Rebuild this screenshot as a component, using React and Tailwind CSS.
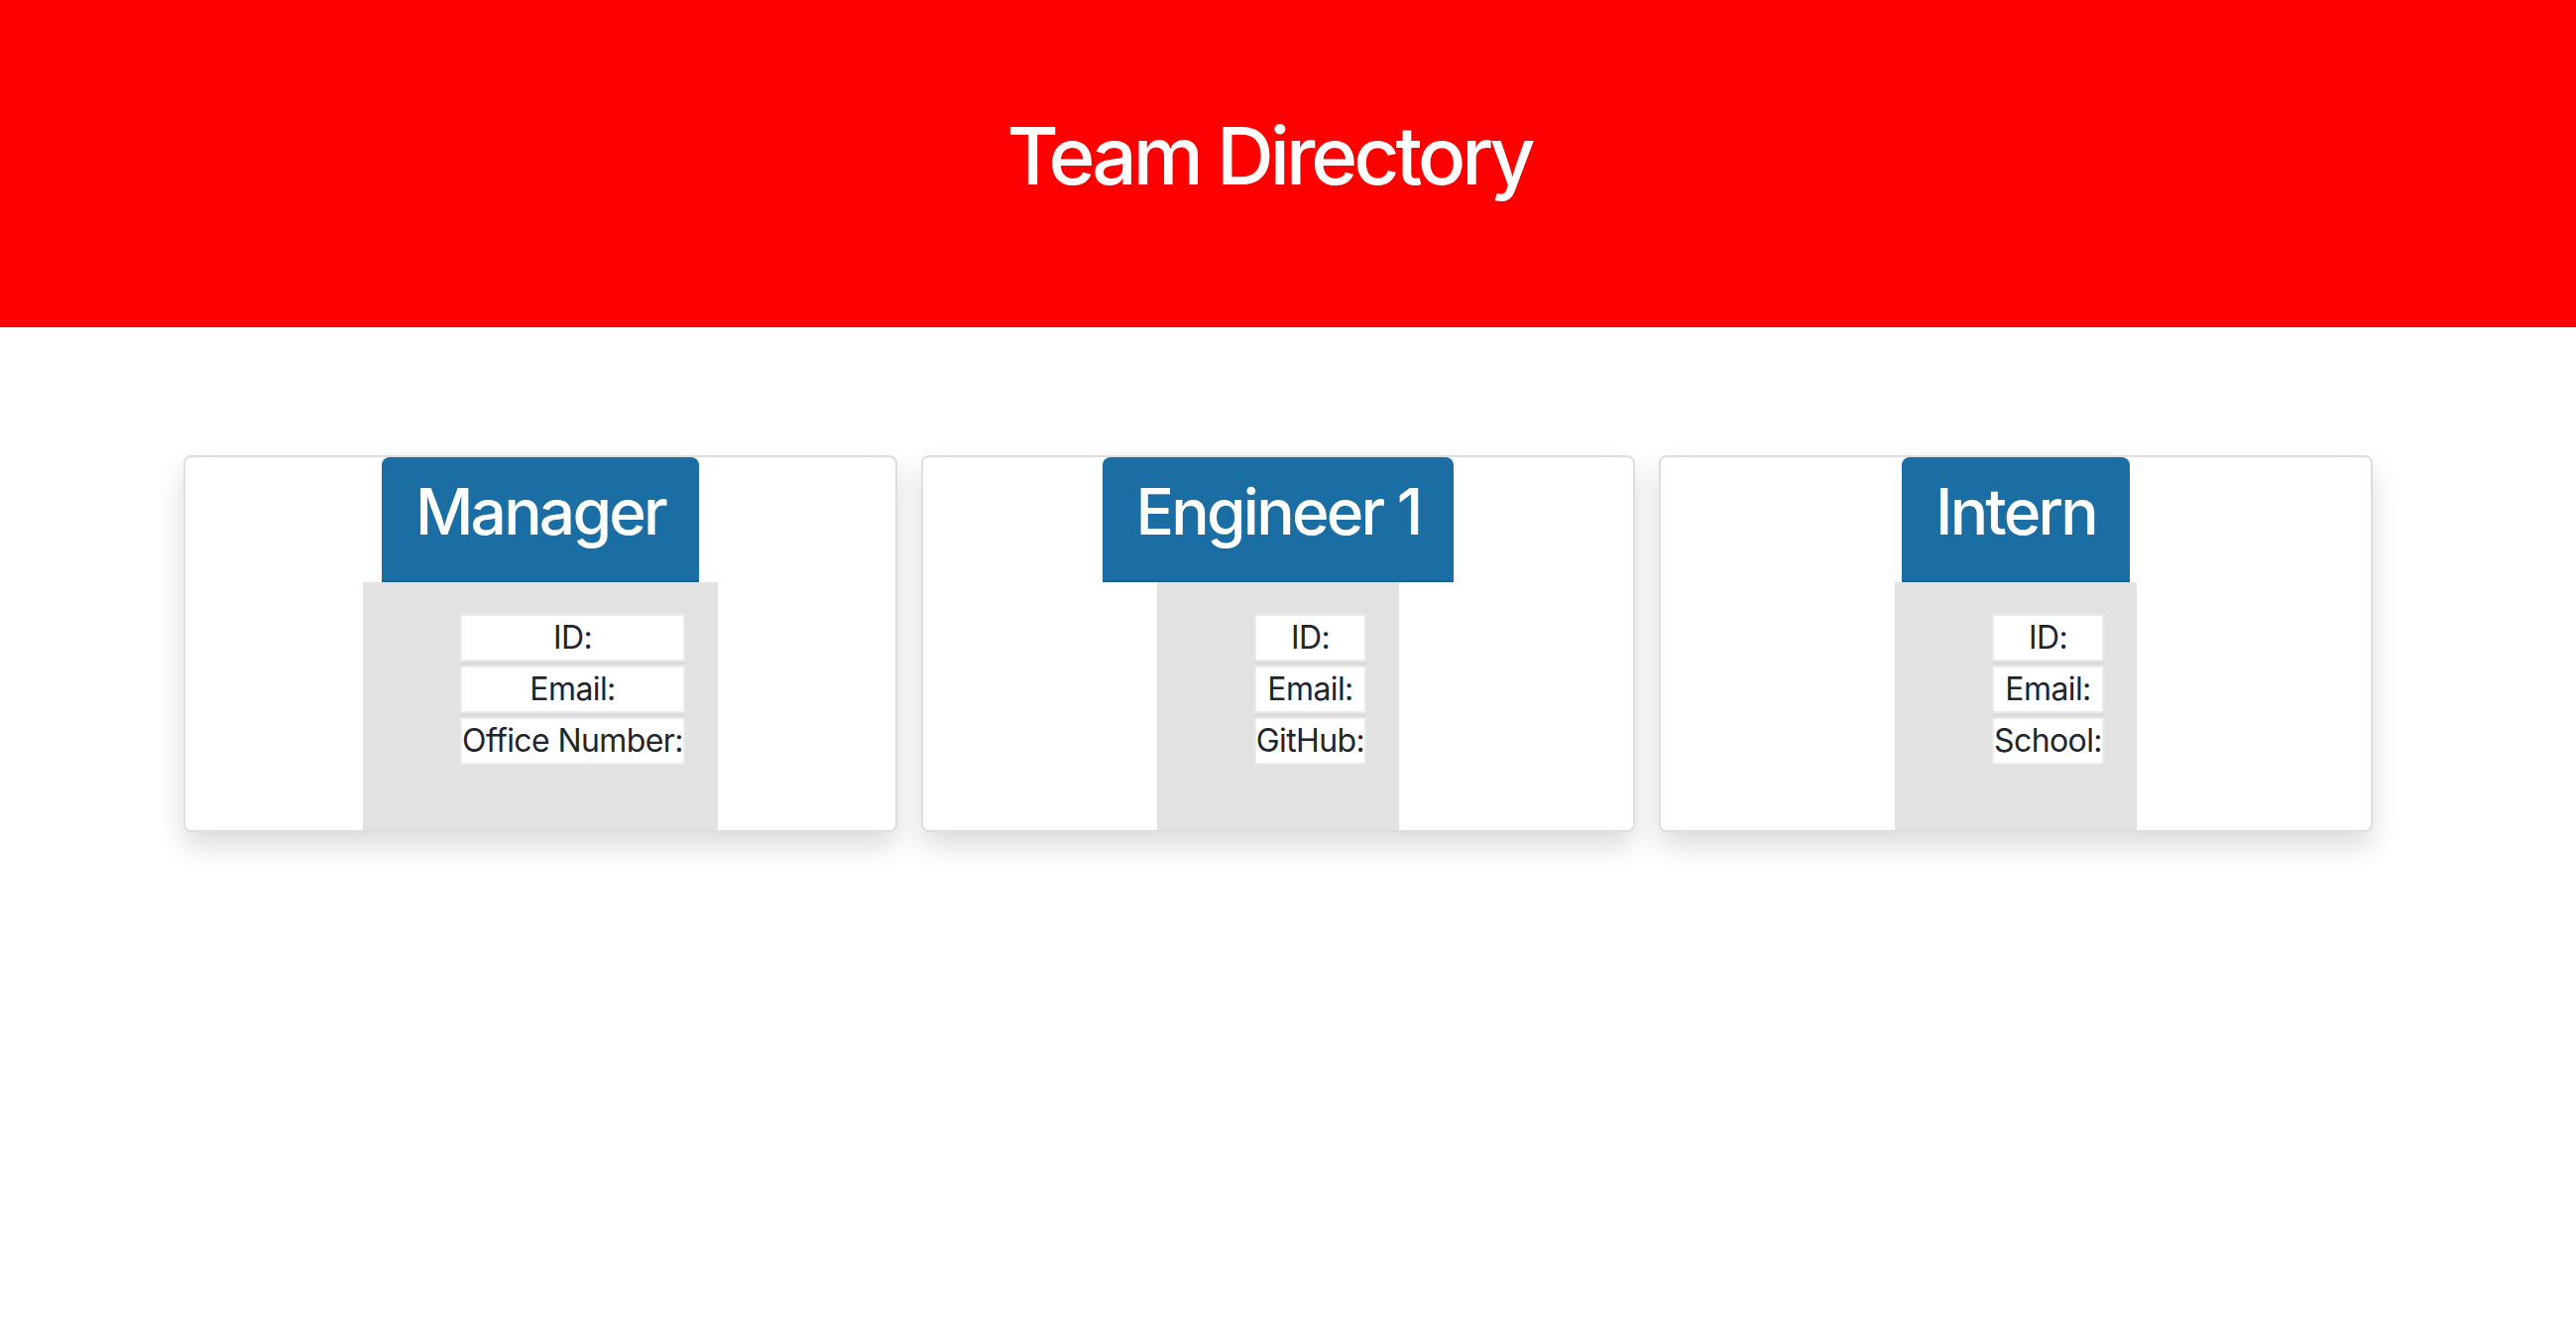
import React from 'react';

const team = [
  { title: 'Manager', fields: ['ID:', 'Email:', 'Office Number:'] },
  { title: 'Engineer 1', fields: ['ID:', 'Email:', 'GitHub:'] },
  { title: 'Intern', fields: ['ID:', 'Email:', 'School:'] },
];

const MemberCard = ({ title, fields }) => (
  <div className="w-[720px] h-[380px] flex flex-col items-center bg-white border-2 border-[#dedede] rounded-[8px] shadow-[0_14px_28px_rgba(0,0,0,0.14)]">
    <h2 className="bg-[#1b6ea3] text-white rounded-t-[8px] px-[34px] pt-[16px] pb-[31px] text-[64px] leading-[77px] font-medium tracking-[-2.8px] border-b-2 border-[#17628f]">
      {title}
    </h2>
    <div className="flex-1 bg-[#e2e2e2] pt-[32px] pl-[98px] pr-[33px]">
      <ul className="flex flex-col gap-[4px] bg-[#dbdbdb]">
        {fields.map((f) => (
          <li
            key={f}
            className="bg-white border-2 border-[#ebebeb] text-center text-[32px] leading-[44px] text-[#212529] tracking-[-0.6px]"
          >
            {f}
          </li>
        ))}
      </ul>
    </div>
  </div>
);

export default function App() {
  return (
    <div className="min-h-screen bg-white font-['Inter',sans-serif]">
      <header className="h-[330px] bg-[#ff0000] flex justify-center pr-[38px] pt-[117px]">
        <h1 className="text-white text-[80px] leading-[80px] font-medium tracking-[-4px]">Team Directory</h1>
      </header>
      <main className="flex gap-[24px] pl-[185px] pt-[129px]">
        {team.map((m) => (
          <MemberCard key={m.title} {...m} />
        ))}
      </main>
    </div>
  );
}
